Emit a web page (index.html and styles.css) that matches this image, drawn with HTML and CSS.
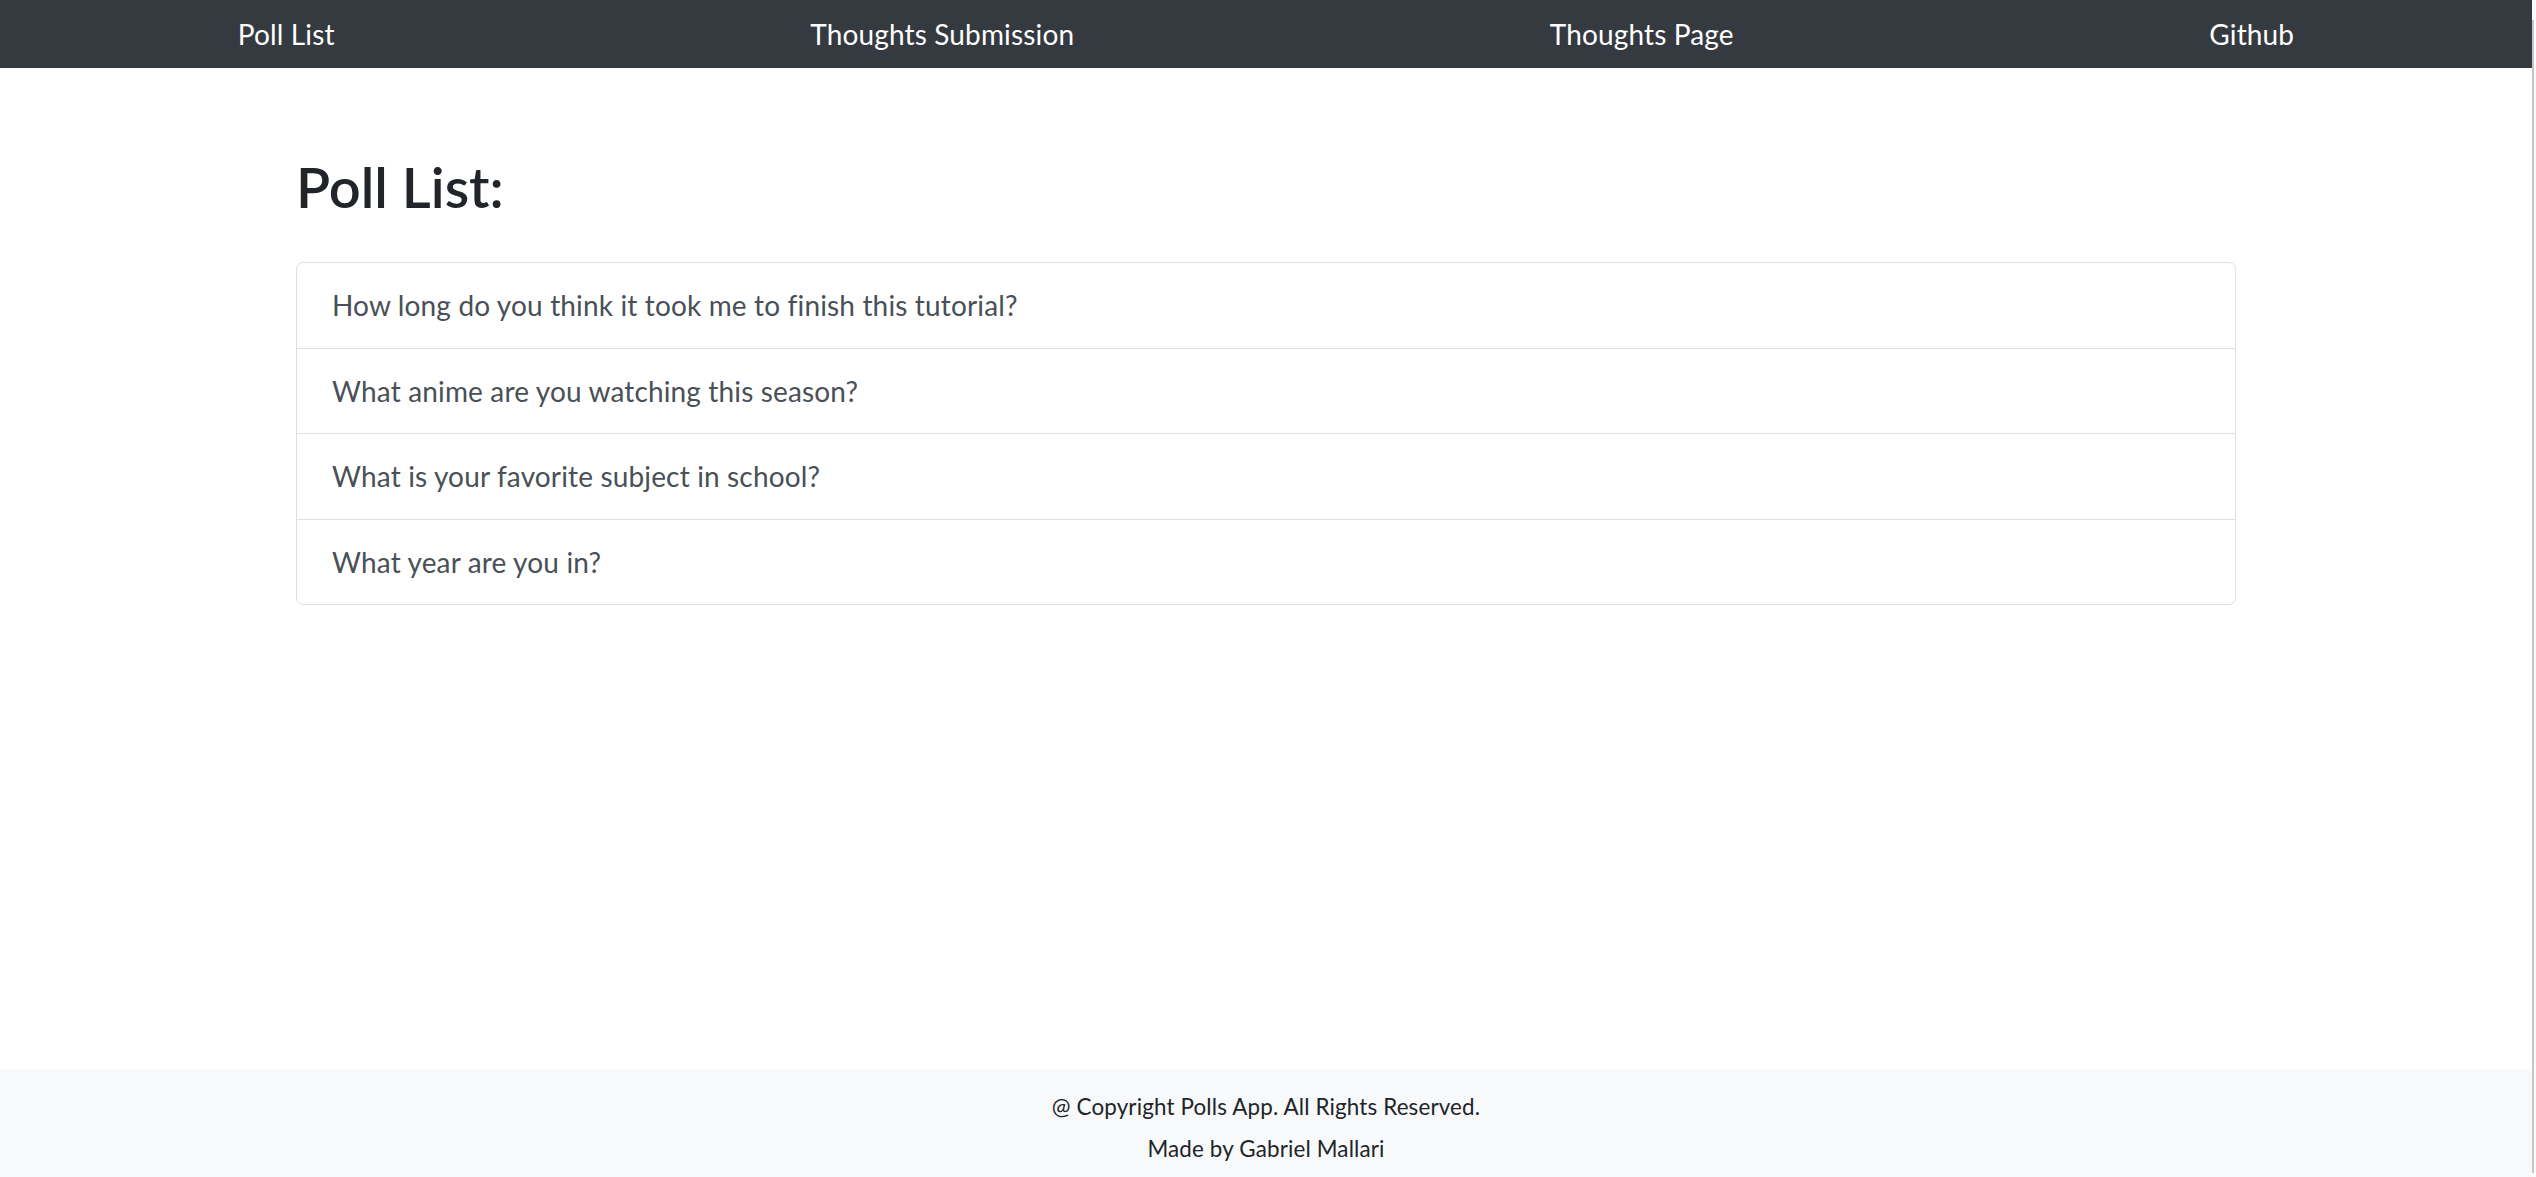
FILE: index.html
```html
<!DOCTYPE html>
<html lang="en">
<head>
<meta charset="utf-8">
<title>Polls App</title>
<link rel="stylesheet" href="styles.css">
</head>
<body>
  <nav class="navbar">
    <a class="nav-link" href="#">Poll List</a>
    <a class="nav-link" href="#">Thoughts Submission</a>
    <a class="nav-link" href="#">Thoughts Page</a>
    <a class="nav-link" href="#">Github</a>
  </nav>
  <main class="main">
    <div class="container">
      <h2 class="title">Poll List:</h2>
      <div class="list-group">
        <a class="list-item" href="#">How long do you think it took me to finish this tutorial?</a>
        <a class="list-item" href="#">What anime are you watching this season?</a>
        <a class="list-item" href="#">What is your favorite subject in school?</a>
        <a class="list-item" href="#">What year are you in?</a>
      </div>
    </div>
  </main>
  <footer class="footer">
    <p class="footer-line">@ Copyright Polls App. All Rights Reserved.</p>
    <p class="footer-line">Made by Gabriel Mallari</p>
  </footer>
  <div class="scrollbar"><div class="scrollbar-thumb"></div></div>
</body>
</html>
```

FILE: styles.css
```css
html, body {
  height: 100%;
}
html {
  overflow: hidden;
}
body {
  margin: 0 4px 0 0;
  min-height: 100vh;
  display: flex;
  flex-direction: column;
  font-family: Lato, "Noto Sans", sans-serif;
  color: #212529;
  background: #fff;
}

.navbar {
  height: 68px;
  flex: none;
  background: #343a40;
  display: flex;
  justify-content: space-around;
  align-items: center;
}
.nav-link {
  color: #fff;
  text-decoration: none;
  font-size: 28px;
  line-height: 42px;
  letter-spacing: 0.15px;
}

.main {
  flex: 1;
}
.container {
  width: 1940px;
  margin: 0 auto;
}
.title {
  margin: 85px 0 42px;
  font-size: 56px;
  line-height: 67px;
  font-weight: 600;
  color: #212529;
}

.list-group {
  display: flex;
  flex-direction: column;
  border: 1px solid #dfdfdf;
  border-radius: 7px;
  overflow: hidden;
}
.list-item {
  display: block;
  padding: 21.25px 35px;
  font-size: 28px;
  line-height: 42px;
  letter-spacing: 0.15px;
  color: #495057;
  text-decoration: none;
  border-top: 1px solid #dfdfdf;
}
.list-item:first-child {
  border-top: none;
}

.footer {
  flex: none;
  height: 108px;
  box-sizing: border-box;
  padding-top: 17px;
  background: #f8f9fa;
  text-align: center;
}
.footer-line {
  margin: 0;
  font-size: 22.4px;
  line-height: 41.7px;
  letter-spacing: 0.15px;
  color: #212529;
}

.scrollbar {
  position: fixed;
  top: 0;
  right: 0;
  width: 4px;
  height: 100%;
  background: #fbfbfb;
}
.scrollbar-thumb {
  margin-top: 20px;
  width: 2px;
  height: calc(100% - 24px);
  background: #c6c6c6;
}
```
